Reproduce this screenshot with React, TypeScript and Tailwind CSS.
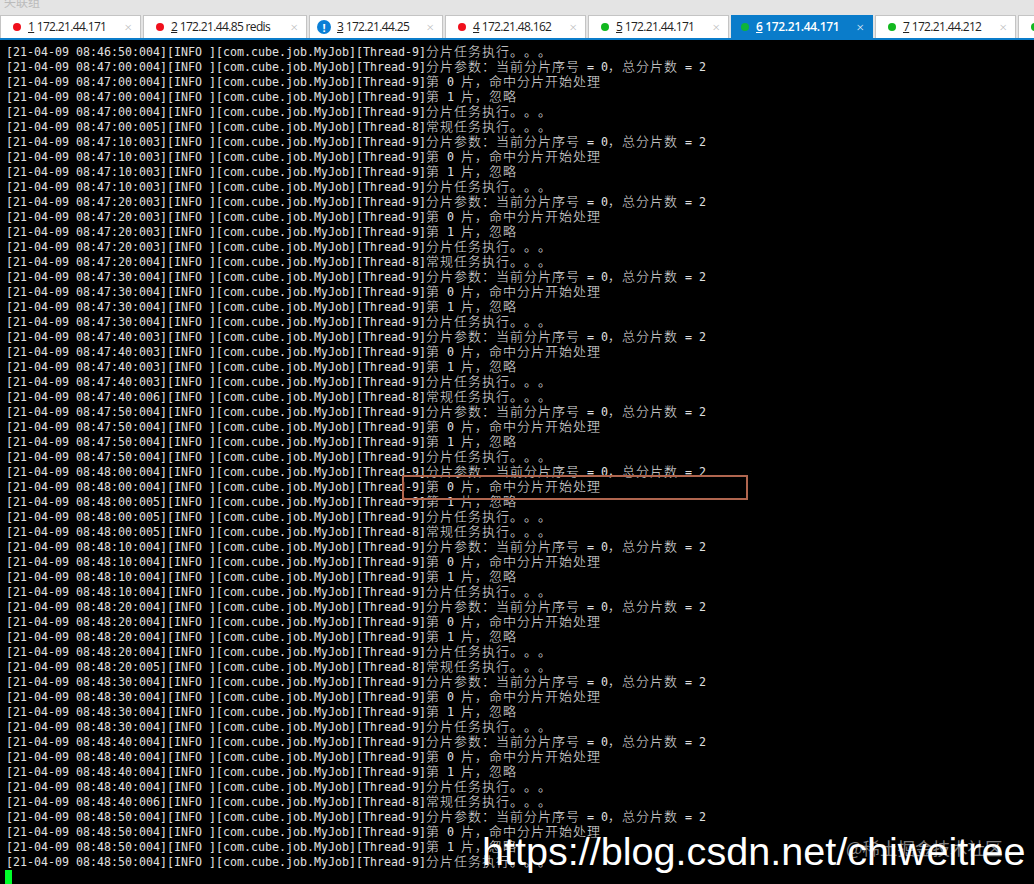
const MONO = "font-['DejaVu_Sans_Mono','Liberation_Mono',monospace]";

type Tab = { n: number; label: string; status: "red" | "green" | "info"; width: string; active?: boolean };

const tabs: Tab[] = [
  { n: 1, label: "172.21.44.171", status: "red", width: "w-[141px]" },
  { n: 2, label: "172.21.44.85 redis", status: "red", width: "w-[164px]" },
  { n: 3, label: "172.21.44.25", status: "info", width: "w-[134px]" },
  { n: 4, label: "172.21.48.162", status: "red", width: "w-[141px]" },
  { n: 5, label: "172.21.44.171", status: "green", width: "w-[141px]" },
  { n: 6, label: "172.21.44.171", status: "green", width: "w-[142px]", active: true },
  { n: 7, label: "172.21.44.212", status: "green", width: "w-[141px]" },
  { n: 8, label: "", status: "green", width: "w-[40px]" },
];

const PARAMS = "分片参数：当前分片序号 = 0，总分片数 = 2";
const HIT = "第 0 片，命中分片开始处理";
const SKIP = "第 1 片，忽略";
const TASK = "分片任务执行。。。";
const NORMAL = "常规任务执行。。。";

// [time, thread, message]
const rows: [string, number, string][] = [
  ["08:46:50:004", 9, TASK],
  ["08:47:00:004", 9, PARAMS],
  ["08:47:00:004", 9, HIT],
  ["08:47:00:004", 9, SKIP],
  ["08:47:00:004", 9, TASK],
  ["08:47:00:005", 8, NORMAL],
  ["08:47:10:003", 9, PARAMS],
  ["08:47:10:003", 9, HIT],
  ["08:47:10:003", 9, SKIP],
  ["08:47:10:003", 9, TASK],
  ["08:47:20:003", 9, PARAMS],
  ["08:47:20:003", 9, HIT],
  ["08:47:20:003", 9, SKIP],
  ["08:47:20:003", 9, TASK],
  ["08:47:20:004", 8, NORMAL],
  ["08:47:30:004", 9, PARAMS],
  ["08:47:30:004", 9, HIT],
  ["08:47:30:004", 9, SKIP],
  ["08:47:30:004", 9, TASK],
  ["08:47:40:003", 9, PARAMS],
  ["08:47:40:003", 9, HIT],
  ["08:47:40:003", 9, SKIP],
  ["08:47:40:003", 9, TASK],
  ["08:47:40:006", 8, NORMAL],
  ["08:47:50:004", 9, PARAMS],
  ["08:47:50:004", 9, HIT],
  ["08:47:50:004", 9, SKIP],
  ["08:47:50:004", 9, TASK],
  ["08:48:00:004", 9, PARAMS],
  ["08:48:00:004", 9, HIT],
  ["08:48:00:005", 9, SKIP],
  ["08:48:00:005", 9, TASK],
  ["08:48:00:005", 8, NORMAL],
  ["08:48:10:004", 9, PARAMS],
  ["08:48:10:004", 9, HIT],
  ["08:48:10:004", 9, SKIP],
  ["08:48:10:004", 9, TASK],
  ["08:48:20:004", 9, PARAMS],
  ["08:48:20:004", 9, HIT],
  ["08:48:20:004", 9, SKIP],
  ["08:48:20:004", 9, TASK],
  ["08:48:20:005", 8, NORMAL],
  ["08:48:30:004", 9, PARAMS],
  ["08:48:30:004", 9, HIT],
  ["08:48:30:004", 9, SKIP],
  ["08:48:30:004", 9, TASK],
  ["08:48:40:004", 9, PARAMS],
  ["08:48:40:004", 9, HIT],
  ["08:48:40:004", 9, SKIP],
  ["08:48:40:004", 9, TASK],
  ["08:48:40:006", 8, NORMAL],
  ["08:48:50:004", 9, PARAMS],
  ["08:48:50:004", 9, HIT],
  ["08:48:50:004", 9, SKIP],
  ["08:48:50:004", 9, TASK],
];

// CJK runs sit on a double-width cell, everything else on the 7px mono cell
const Message = ({ text }: { text: string }) => (
  <>
    {text.split(/([^\x00-\x7f]+)/).map((part, i) =>
      i % 2 ? (
        <span
          key={i}
          className="font-['Noto_Sans_CJK_SC',sans-serif] text-[13px] leading-[15px] tracking-[1px] font-light [text-spacing-trim:space-all]"
        >
          {part}
        </span>
      ) : (
        <span key={i}>{part}</span>
      ),
    )}
  </>
);

const StatusDot = ({ status, active }: { status: Tab["status"]; active?: boolean }) => {
  if (status === "info") {
    return (
      <span className="-ml-[2px] mr-[2px] flex h-[14px] w-[14px] shrink-0 items-center justify-center rounded-full bg-[#0a7fd6] text-[11px] font-bold leading-none text-white">
        !
      </span>
    );
  }
  return (
    <span
      className={`mx-[3px] h-[8px] w-[8px] shrink-0 rounded-full ${
        status === "red" ? "bg-[#f00f1c]" : active ? "bg-[#0fb43a]" : "bg-[#12b81f]"
      }`}
    />
  );
};

const TabItem = ({ tab }: { tab: Tab }) => (
  <div
    className={`flex h-[23px] shrink-0 items-center border-x border-t pr-[8px] font-['Open_Sans',sans-serif] text-[12px] ${tab.width} ${
      tab.active ? "border-[#0a7cca] bg-[#0a7cca] pl-[6px] text-white" : "border-[#c4c4c4] bg-white pl-[9px] text-[#222222]"
    }`}
  >
    <StatusDot status={tab.status} active={tab.active} />
    {tab.n < 8 && (
      <>
        <span className={`ml-[4px] whitespace-nowrap ${tab.active ? "font-semibold tracking-[-0.35px]" : "tracking-[-0.65px]"}`}>
          <span className="underline">{tab.n}</span> {tab.label}
        </span>
        <span className={`ml-auto text-[13px] font-light leading-none ${tab.active ? "text-white" : "text-[#b5b5b5]"}`}>×</span>
      </>
    )}
  </div>
);

export default function App() {
  return (
    <div className="relative h-[884px] w-[1034px] overflow-hidden bg-black">
      {/* top bar + tabs */}
      <div className="h-[40px] overflow-hidden border-b-2 border-[#0a7cca] bg-[#e4e4e4]">
        <div className="h-[15px] overflow-hidden pl-[4px] font-['Noto_Sans_CJK_SC',sans-serif] text-[12px] leading-[4px] text-[#bbbbbb]">
          失联组
        </div>
        <div className="flex gap-[2px]">
          {tabs.map((tab) => (
            <TabItem key={tab.n} tab={tab} />
          ))}
        </div>
      </div>

      {/* log output */}
      <div className={`${MONO} pl-[6px] pt-[3px] text-[11.63px] leading-[15px] text-[#e0e0e0]`}>
        {rows.map(([time, thread, msg], i) => (
          <div key={i} className="h-[15px] whitespace-pre">
            {`[21-04-09 ${time}][INFO ][com.cube.job.MyJob][Thread-${thread}]`}
            <Message text={msg} />
          </div>
        ))}
        <div className="ml-[-1px] mt-[2px] h-[14px] w-[7px] bg-[#00ff2a]" />
      </div>

      {/* red highlight drawn over the log */}
      <div className="absolute left-[402px] top-[475px] h-[25px] w-[346px] border-2 border-[#b0664f]" />

      {/* watermarks */}
      <div className="absolute left-[846px] top-[833px] whitespace-nowrap font-['Noto_Sans_CJK_SC',sans-serif] text-[17.5px] leading-[30px] text-[#808080]">
        @稀土掘金技术社区
      </div>
      <div className="absolute left-[482px] top-[826px] whitespace-nowrap font-['Liberation_Sans',sans-serif] text-[39.6px] leading-[50px] text-white">
        https://blog.csdn.net/chiweitree
      </div>
    </div>
  );
}
